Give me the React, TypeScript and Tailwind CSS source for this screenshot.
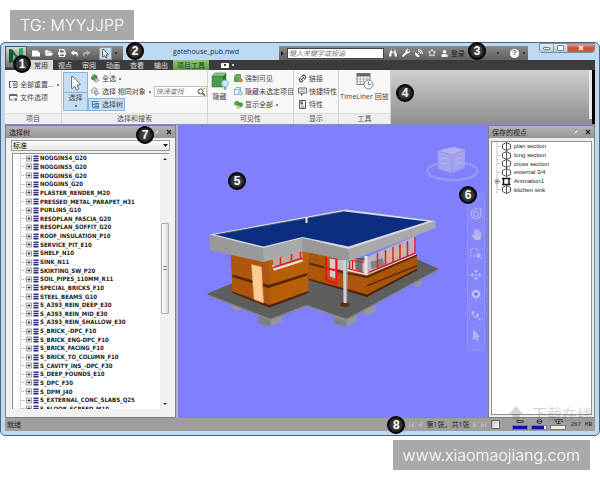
import type { ReactNode } from 'react';
import {
  FaBinoculars,
  FaFolderOpen,
  FaHandPaper,
  FaMousePointer,
  FaPrint,
  FaReply,
  FaSatelliteDish,
  FaShare,
  FaUser,
  FaWrench,
} from 'react-icons/fa';
import { Link2, Star } from 'lucide-react';

const tabs = ['常用', '视点', '审阅', '动画', '查看', '输出'];

const treeItems = [
  'NOGGINS4_G20',
  'NOGGINS5_G20',
  'NOGGINS6_G20',
  'NOGGINS_G20',
  'PLASTER_RENDER_M20',
  'PRESSED_METAL_PARAPET_H31',
  'PURLINS_G10',
  'RESOPLAN_FASCIA_G20',
  'RESOPLAN_SOFFIT_G20',
  'ROOF_INSULATION_P10',
  'SERVICE_PIT_E10',
  'SHELF_N10',
  'SINK_N11',
  'SKIRTING_SW_P20',
  'SOIL_PIPES_110MM_R11',
  'SPECIAL_BRICKS_F10',
  'STEEL_BEAMS_G10',
  'S_A393_REIN_DEEP_E30',
  'S_A393_REIN_MID_E30',
  'S_A393_REIN_SHALLOW_E30',
  'S_BRICK_-DPC_F10',
  'S_BRICK_ENG-DPC_F10',
  'S_BRICK_FACING_F10',
  'S_BRICK_TO_COLUMN_F10',
  'S_CAVITY_INS_-DPC_F30',
  'S_DEEP_FOUNDS_E10',
  'S_DPC_F30',
  'S_DPM_J40',
  'S_EXTERNAL_CONC_SLABS_Q25',
  'S_FLOOR_SCREED_M10',
];

const viewpoints = ['plan section', 'long section', 'cross section', 'external 3/4', 'Animation1', 'kitchen sink'];

function Badge({ n, className }: { n: number; className: string }) {
  return (
    <span
      className={`absolute z-20 flex size-[18px] items-center justify-center rounded-full border-2 border-black bg-radial from-[#555555] to-[#161616] font-['Liberation_Sans',sans-serif] text-[12px] leading-none font-bold text-white ${className}`}
    >
      {n}
    </span>
  );
}

function RibbonPanel({ title, className, children }: { title: string; className: string; children: ReactNode }) {
  return (
    <section className={`flex shrink-0 flex-col border-r border-[#d2d2d2] bg-[#f8f8f8] ${className}`}>
      <div className="flex flex-1 items-start pt-[2px]">{children}</div>
      <h2 className="h-[11px] border-t border-[#dcdcdc] bg-[#eeeeee] text-center leading-[10px] text-[#555555]">{title}</h2>
    </section>
  );
}

function RibbonButton({ icon, label, caret, active }: { icon: ReactNode; label: string; caret?: boolean; active?: boolean }) {
  return (
    <button
      className={`flex h-[13px] items-center gap-[2px] border px-[1px] whitespace-nowrap ${
        active ? 'border-[#86b4dd] bg-[#c5def5]' : 'border-transparent'
      }`}
    >
      <span className="flex size-[10px] shrink-0 items-center justify-center">{icon}</span>
      {label}
      {caret && <span className="ml-[1px] size-[2px] rounded-full bg-[#555555]" />}
    </button>
  );
}

function ResetIcon() {
  return (
    <svg viewBox="0 0 9 9" className="size-[9px]" fill="none" stroke="#666" strokeWidth="1">
      <path d="M2.5 1.5H8v6H4" />
      <path d="M.5 1v7M.5 1.5H2M.5 7.5H2" />
      <path d="M4 3l2 2.500M6 3v2.500H4" stroke="#3c7fc0" />
    </svg>
  );
}

function OptionsIcon() {
  return (
    <svg viewBox="0 0 9 9" className="size-[9px]" fill="none" stroke="#666" strokeWidth="1">
      <path d="M4.500 7H.5V1.500h7.500V4" />
      <path d="M.5 2.500h7.500" />
      <path d="M5 5.500h3.500L7 8.500z" fill="#555" stroke="none" />
    </svg>
  );
}

function GlobeCursorIcon({ green }: { green?: boolean }) {
  return (
    <svg viewBox="0 0 9 9" className="size-[9px]">
      <path d="M.5 3L3 .5l3 1.500v3L3.500 6.500.5 5z" fill={green ? '#4f9c4a' : '#e8e8e8'} stroke={green ? '#2d7430' : '#777'} strokeWidth=".7" />
      <path d="M3.500 3.500l4.500 3-2 .3L5 8.500z" fill="#fff" stroke="#555" strokeWidth=".6" />
    </svg>
  );
}

function TreeIcon() {
  return (
    <svg viewBox="0 0 9 9" className="size-[9px]" fill="none" stroke="#3f7fbf" strokeWidth="1">
      <path d="M.5 1.500h7M1.500 1.500v6h2M1.500 4.500h2" />
      <rect x="4" y="3.500" width="3.500" height="1.500" />
      <rect x="4" y="6.500" width="3.500" height="1.500" />
    </svg>
  );
}

function BoxIcon({ extra, outline }: { extra: string; outline?: boolean }) {
  return (
    <svg viewBox="0 0 9 9" className="size-[9px]">
      <path
        d="M.5 2.500L2 .5h4.500v5L5 7.500H.5z"
        fill={outline ? '#eef6fd' : '#5aa653'}
        stroke={outline ? '#4b94d0' : '#39783a'}
        strokeWidth=".7"
      />
      <path d="M.5 2.500H5v5M5 2.500L6.500.5" fill="none" stroke={outline ? '#4b94d0' : '#8bc685'} strokeWidth=".6" />
      <circle cx="6.800" cy="6.300" r="1.900" fill={extra} stroke="#888" strokeWidth=".4" />
    </svg>
  );
}

function ShowAllIcon() {
  return (
    <svg viewBox="0 0 9 9" className="size-[9px]">
      <path d="M.5 2.500L2.500 1l2.500 1v2.500L3 5.500.5 4.500z" fill="#5aa653" stroke="#39783a" strokeWidth=".5" />
      <path d="M4 3.500l2-1 2.500 1V6l-2 1L4 6z" fill="#4e9c4b" stroke="#2f7435" strokeWidth=".5" />
      <circle cx="4.500" cy="7" r="1.500" fill="#f2d54c" stroke="#a99029" strokeWidth=".4" />
    </svg>
  );
}

function HideIcon() {
  return (
    <svg viewBox="0 0 18 19" className="h-[19px] w-[18px]">
      <path d="M1 4l3-3h11l-3 3z" fill="#8fca85" />
      <path d="M1 4h11v11H1z" fill="#4e9c4b" />
      <path d="M12 4l3-3v11l-3 3z" fill="#2f7435" />
      <path d="M1 4h11v11H1zM1 4l3-3h11v11l-3 3" fill="none" stroke="#3a803c" strokeWidth=".6" />
      <circle cx="14" cy="11.500" r="3.400" fill="#cfeafc" stroke="#6da5cf" strokeWidth=".7" />
      <path d="M12.700 15h2.600v2.800h-2.600z" fill="#8a9aa8" />
    </svg>
  );
}

function TimeLinerIcon() {
  return (
    <svg viewBox="0 0 18 18" className="size-[18px]">
      <rect x="1" y="1.500" width="13" height="11" fill="#fff" stroke="#777" />
      <path d="M1 1.500h13v3H1z" fill="#666" />
      <path d="M1 7h13M1 9.700h13M4.300 4v8M7.600 4v8M10.900 4v8" stroke="#999" strokeWidth=".7" />
      <circle cx="12.500" cy="12.500" r="4.500" fill="#f0f4f7" stroke="#888" />
      <path d="M12.500 9.500v3.200h2.500" fill="none" stroke="#4a7fae" strokeWidth=".9" />
    </svg>
  );
}

function PanelHeader({ title }: { title: string }) {
  return (
    <header className="relative flex h-[12px] shrink-0 items-center bg-linear-to-b from-[#b4b4b4] to-[#969696] px-[3px] text-[#222222]">
      <h2 className="flex-1">{title}</h2>
      <button aria-label="固定" className="mr-[6px]">
        <svg viewBox="0 0 6 6" className="size-[6px]">
          <path d="M3 .5L5.500 3 4 3.300 3 5 1 3l1.700-1z" fill="#e4e4e4" stroke="#777" strokeWidth=".4" />
          <path d="M2 4L.5 5.500" stroke="#e4e4e4" strokeWidth=".8" />
        </svg>
      </button>
      <button aria-label="关闭">
        <svg viewBox="0 0 6 6" className="size-[6px]" stroke="#222" strokeWidth="1.200">
          <path d="M1 1l4 4M5 1L1 5" />
        </svg>
      </button>
    </header>
  );
}

function ModelScene() {
  return (
    <svg viewBox="178 125 309 293" className="size-full" role="img" aria-label="gatehouse">
      {/* footings */}
      <path d="M229 306l7 5 6-2v-4zM259 314l11 12 11-4v-8zM334 315l0 8 12 4 10-6v-8zM363 309v5l6 1 6-4v-5zM412 284l5 3 4-3v-4z" fill="#97979f" />
      <path d="M258 315l12 5v7l-12-4zM333 317l13 4v6l-13-4z" fill="#7f7f86" />
      {/* slab */}
      <path d="M206 294l26-11 70-24 110-2 26 12-92 50-40-14-36 14z" fill="#5e5e5e" />
      <path d="M206 294l64 25 36-14 40 14 92-50v1.500l-92 50-40-14-36 14-64-25z" fill="#85858a" />
      {/* walls */}
      <path d="M230 252l39 9v46l-37-14z" fill="#ad560b" />
      <path d="M269 260l39-11v43.500l-39 14.500z" fill="#b85e08" />
      <path d="M308 250l58.500 12v34L308 280z" fill="#ad560b" />
      <path d="M366.500 275l50-21v16l-50 26z" fill="#a95508" />
      <path d="M232 274.500l36 10.500 39-12v2.500l-39 12.500-36-11zM309 262.500l15 4v2l-15-4zM336 270l30.500 6 50-22v2l-50 22-30.500-6zM366.500 285l50-20v1.500l-50 20z" fill="#54260a" />
      <path d="M232 291.500l37 13.500 39-14v2l-39 14.500-37-14.500zM308 278.500l58.500 16 50-26v2l-50 26.500-58.500-17z" fill="#4a250d" />
      {/* door */}
      <path d="M251 264.500l10 2.500 2 36-9.500-3.500z" fill="#ffcb94" stroke="#e0a466" strokeWidth=".5" />
      {/* windows, small wing */}
      <path d="M272 259l30-8v9.500l-28 9z" fill="#b8a9a0" />
      <path d="M272.500 265l1.500 4.500 28-9" fill="none" stroke="#e9e2df" strokeWidth="2" />
      <path d="M272.500 267.500l29.500-9.500M280 257v8M291 254v8M300 252v8" fill="none" stroke="#e81925" strokeWidth="1.500" />
      {/* windows, front */}
      <path d="M336 257l30.500 4v14L336 269z" fill="#c5bfc6" />
      <path d="M355 260h7v12l-7-2z" fill="#75706e" />
      <path d="M325 256h11.500v27l-10-3z" fill="#ae5a12" />
      <path d="M329 258.500l6 1v19l-5.500-2z" fill="#cfccd3" />
      <path d="M325.500 256.500v23l10.500 4v-25M325 268l11 2.500" fill="none" stroke="#f3101c" strokeWidth="2" />
      <path d="M336 258.500l30 4M347 268.500l16 4M349 259v10M352 259v10" fill="none" stroke="#f3101c" strokeWidth="1.200" />
      {/* windows, side */}
      <path d="M366.500 257L415 236v17l-48.500 21z" fill="#b9b1c4" />
      <path d="M370 262l12-4 2 8-13 3z" fill="#85807a" />
      <path d="M385 254l20-8v8l-20 8z" fill="#d5b497" />
      <path d="M368 272.500L415 253M377 253v16M385 250v15M392.500 247v15M399.500 244v15M407 241v15M414.500 237v16.500" fill="none" stroke="#f01b28" strokeWidth="1.500" />
      <path d="M365.500 256v19" stroke="#e5e5e8" strokeWidth="3" />
      <path d="M347 270l19 4.800L416 254" fill="none" stroke="#e3dfdf" strokeWidth="1" />
      {/* roof */}
      <path d="M209 235l54 13 39-10 46 11 87-28v7l-86 33-47-10-39 11-53-12z" fill="#a9a9a9" />
      <path d="M209 235l54 13v14l-53-12zM302 238l46 11 1 12-47-10z" fill="#999999" />
      <path d="M209 234.500L345 209.500l90 11.500-87 28-46-11-39 10z" fill="#d7dad9" />
      <path d="M215 234.800L344 211.500l83 10-79 25-46-9.500-39 9.500z" fill="#0b2e80" />
      <path d="M215 234.800L344 211.500" stroke="#2c5c58" strokeWidth=".8" />
      <path d="M306 218v5" stroke="#fff" strokeWidth="1.800" />
      {/* column */}
      <path d="M340 303l4-2 5 2v3l-5 1-4-1z" fill="#54300f" />
      <path d="M342.500 260h4.500l-.5 43h-3.500z" fill="#d0d0d3" />
      <path d="M346.200 260v43" stroke="#96969b" strokeWidth="1" />
      {/* view cube */}
      <ellipse cx="452" cy="171" rx="25" ry="9" fill="none" stroke="#9696f5" strokeWidth="2.500" />
      <path d="M437 151l16-4 12 3-1 18-13 5-13-4z" fill="#a3a3ee" />
      <path d="M437 151l16-4 12 3-13 5z" fill="#b0b0f1" />
      <path d="M437 151l15 4-1 18M465 150l-13 5" fill="none" stroke="#9494ea" strokeWidth="1" />
      <path d="M441 158l6 1M441 163l6 1M456 159l5-1M456 164l5-2" stroke="#b7b7f3" strokeWidth="1" />
    </svg>
  );
}

function NavBar() {
  return (
    <nav
      aria-label="导航"
      className="absolute top-[68px] right-[3px] flex h-[158px] w-[18px] flex-col items-center justify-between border border-[#9494f4] bg-[#8787fb] pt-[14px] pb-[9px] text-[#b4b4f1]"
    >
      <button aria-label="导航控制盘">
        <svg viewBox="0 0 12 12" className="size-[12px]" fill="none" stroke="currentColor" strokeWidth="1.200">
          <path d="M6 1h5v5a5 5 0 1 1-5-5z" />
          <circle cx="6" cy="6" r="2.500" />
        </svg>
      </button>
      <button aria-label="平移"><FaHandPaper className="size-[11px]" /></button>
      <button aria-label="缩放窗口">
        <svg viewBox="0 0 12 12" className="size-[12px]" fill="none" stroke="currentColor">
          <path d="M8 8H1V1h7v3" strokeDasharray="2 1" />
          <circle cx="8.500" cy="7.500" r="1.800" fill="currentColor" />
          <path d="M10 9l2 2" />
        </svg>
      </button>
      <button aria-label="动态观察">
        <svg viewBox="0 0 12 12" className="size-[12px]" fill="currentColor">
          <path d="M6 0l2.300 3H3.700zM6 12l2.300-3H3.700zM0 6l3-2.300v4.600zM12 6L9 3.700v4.600z" />
          <path d="M6 3v6M3 6h6" stroke="currentColor" strokeWidth=".8" />
        </svg>
      </button>
      <button aria-label="环视">
        <svg viewBox="0 0 12 12" className="size-[12px]">
          <circle cx="6" cy="5" r="4.300" fill="#bdbdf5" />
          <circle cx="6" cy="5" r="1.600" fill="#6666c8" />
          <path d="M2 9l-1 2.500M10 9l1 2.500M6 10v1.500" stroke="#a5a5ee" />
        </svg>
      </button>
      <button aria-label="漫游">
        <svg viewBox="0 0 12 12" className="size-[12px]" fill="currentColor">
          <ellipse cx="3" cy="3" rx="1.500" ry="2.200" />
          <ellipse cx="7.500" cy="5.500" rx="1.500" ry="2.200" />
          <circle cx="4.500" cy="7" r="1" />
          <circle cx="9.500" cy="9.500" r="1.300" />
        </svg>
      </button>
      <button aria-label="选择"><FaMousePointer className="size-[11px]" /></button>
    </nav>
  );
}

function SelectionTree() {
  return (
    <aside className="flex w-[171px] shrink-0 flex-col border border-[#808080] bg-[#f1f1f1]">
      <div className="relative">
        <PanelHeader title="选择树" />
        <Badge n={7} className="right-[21px] top-0" />
      </div>
      <div className="relative mx-[5px] mt-[2px]">
        <select aria-label="选择树模式" className="block h-[11px] w-full appearance-none border border-[#a0a0a0] bg-linear-to-b from-white to-[#e6e6e6] px-[1px] text-[7px] leading-[9px]">
          <option>标准</option>
        </select>
        <svg viewBox="0 0 5 3" className="pointer-events-none absolute top-[4px] right-[2px] h-[3px] w-[5px]">
          <path d="M0 0h5L2.500 3z" fill="#222" />
        </svg>
      </div>
      <div className="mx-[6px] mt-[2px] mb-[8px] flex min-h-0 flex-1 overflow-hidden border-t border-l border-[#909090] bg-white">
        <ul className="ml-[7px] flex h-[calc(100%+4px)] flex-1 flex-col border-l border-dotted border-[#b0b0b0] font-['DejaVu_Sans_Condensed','DejaVu_Sans',sans-serif] text-[6px] leading-none font-bold text-[#1c1c1c]">
          {treeItems.map((item) => (
            <li key={item} className="flex min-h-0 flex-1 items-center whitespace-nowrap">
              <span className="w-[5px] border-t border-dotted border-[#b0b0b0]" />
              <svg viewBox="0 0 13 7" className="mr-[1px] h-[7px] w-[13px]">
                <rect x=".5" y="1" width="5" height="5" fill="#fff" stroke="#888" strokeWidth=".8" />
                <path d="M1.500 3.500h3M3 2v3" stroke="#222" strokeWidth=".8" />
                <path d="M7.500.5h5v1.500h-5zM7.500 2.700h5v1.500h-5zM7.500 5h5v1.500h-5z" fill="#27277f" />
                <path d="M7 1.500h4M7 4h4" stroke="#6868b5" strokeWidth=".5" />
              </svg>
              {item}
            </li>
          ))}
        </ul>
        <div className="flex w-[9px] flex-col items-center bg-[#f0f0f0] py-[4px]">
          <svg viewBox="0 0 4 2" className="h-[2px] w-[4px]"><path d="M0 2h4L2 0z" fill="#333" /></svg>
          <div className="flex-[64]" />
          <div className="flex w-[8px] flex-[91] items-center justify-center rounded-[1px] border border-[#b0b0b0] bg-linear-to-r from-white to-[#d8d8d8]">
            <span className="h-[4px] w-[4px] border-y border-[#888888]" />
          </div>
          <div className="flex-[91]" />
          <svg viewBox="0 0 4 2" className="h-[2px] w-[4px]"><path d="M0 0h4L2 2z" fill="#333" /></svg>
        </div>
      </div>
    </aside>
  );
}

function SavedViewpoints() {
  return (
    <aside className="flex w-[107px] shrink-0 flex-col border border-[#808080] bg-[#ededed]">
      <PanelHeader title="保存的视点" />
      <div className="mx-[2px] mt-[3px] mb-[2px] flex-1 border border-[#909090] bg-white pl-[2px]">
        <ul className="grid h-[52px] auto-rows-fr font-['Liberation_Sans',sans-serif] text-[6px] leading-none text-[#222222]">
          {viewpoints.map((name) => (
            <li key={name} className="flex items-center">
              <svg viewBox="0 0 17 9" className="mr-[3px] h-[9px] w-[17px]" fill="none">
                <path d="M3 0v9M3 4.500h4" stroke="#bbb" strokeWidth=".8" />
                {name === 'Animation1' ? (
                  <>
                    <circle cx="3" cy="4.500" r="2.300" fill="#fff" stroke="#999" strokeWidth=".8" />
                    <path d="M1.500 4.500h3M3 3v3" stroke="#555" strokeWidth=".8" />
                    <path d="M9.500 1v7M15 1v7M8 1.500h8.500M8 7.500h8.500" stroke="#111" strokeWidth="1.400" />
                  </>
                ) : (
                  <path d="M8.500 2.500L12.500.5l4 2v4l-4 2-4-2zM12.500.5v8" fill="#fff" stroke="#444" strokeWidth=".9" />
                )}
              </svg>
              {name}
            </li>
          ))}
        </ul>
      </div>
    </aside>
  );
}

function TitleBar() {
  return (
    <header className="relative flex h-[14px] shrink-0">
      <button aria-label="应用程序菜单" className="absolute top-0 left-0 z-10 h-[22px] w-[22px] border border-[#555555] bg-linear-to-b from-[#d5d5d5] to-[#777777]">
        <svg viewBox="0 0 20 20" className="size-full">
          <path d="M3 16V2l4 1 6 8V2l4-1v13l-3 1L6.500 7v8z" fill="#16803f" />
          <path d="M3 2l4 1v12l-4 1z" fill="#0b5a2b" />
          <path d="M13 2l4-1v13l-3 1z" fill="#2ea65a" />
        </svg>
      </button>
      <Badge n={1} className="top-[9px] left-[8px]" />
      <div className="flex w-[118px] items-center gap-[5px] bg-linear-to-b from-[#8c8c8c] to-[#5b5b5b] pl-[27px] text-white">
        <button aria-label="新建">
          <svg viewBox="0 0 8 7" className="h-[7px] w-[8px]"><path d="M0 .5h5.500L8 3v3.500H0z" fill="#fff" /></svg>
        </button>
        <button aria-label="打开"><FaFolderOpen className="size-[8px]" /></button>
        <button aria-label="打印"><FaPrint className="size-[8px]" /></button>
        <button aria-label="撤消"><FaReply className="size-[7px]" /></button>
        <button aria-label="恢复" className="text-[#b5b5b5]"><FaShare className="size-[7px]" /></button>
        <button aria-label="选择" className="ml-[4px] flex h-[13px] w-[13px] shrink-0 items-center justify-center border border-[#6fa4d6] bg-[#c4dcf2]">
          <FaMousePointer className="size-[9px] overflow-visible text-white" stroke="#444" strokeWidth={50} />
        </button>
        <span className="-ml-[2px] size-[2px] shrink-0 rounded-full bg-[#222222]" />
      </div>
      <Badge n={2} className="-top-[4px] left-[121px]" />
      <h1 className="flex-1 pl-[50px] font-['Open_Sans',sans-serif] text-[7px] leading-[12px] text-[#1d2b3a]">gatehouse_pub.nwd</h1>
      <div className="relative flex w-[249px] items-center gap-[5px] bg-linear-to-b from-[#8a8a8a] to-[#606060] pl-[2px] text-[#f2f2f2]">
        <svg viewBox="0 0 3 5" className="-mr-[2px] h-[5px] w-[3px]"><path d="M0 0l3 2.500L0 5z" fill="#222" /></svg>
        <input aria-label="搜索" placeholder="键入关键字或短语" className="h-[11px] w-[97px] border border-[#444444] bg-white px-[1px] text-[7px] italic text-black placeholder:text-[#777777]" />
        <button aria-label="查找"><FaBinoculars className="size-[8px]" /></button>
        <button aria-label="工具"><FaWrench className="size-[8px]" /></button>
        <button aria-label="通讯中心"><FaSatelliteDish className="size-[8px]" /></button>
        <button aria-label="收藏夹"><Star className="size-[8px]" strokeWidth={3} /></button>
        <button className="flex items-center gap-[3px] whitespace-nowrap text-[#1c1c1c]">
          <FaUser className="size-[7px] text-white" />
          登录
        </button>
        <Badge n={3} className="-top-[4px] right-[42px]" />
        <button aria-label="帮助" className="absolute right-[9px] flex size-[9px] items-center justify-center rounded-full bg-white font-['Liberation_Sans',sans-serif] text-[8px] leading-none font-bold text-[#2c5f9e]">?</button>
        <span className="absolute right-[3px] size-[2px] rounded-full bg-[#222222]" />
        <span className="absolute right-[29px] size-[2px] rounded-full bg-[#222222]" />
      </div>
      <div className="-mt-[3px] ml-[11px] flex h-[10px] w-[56px] overflow-hidden rounded-b-[3px] border border-[#7f8d9c]">
        <button aria-label="最小化" className="flex flex-1 items-center justify-center border-r border-[#8d9cac] bg-linear-to-b from-[#e2edf7] to-[#b4c7da]">
          <span className="h-[3px] w-[7px] rounded-[1px] border border-[#70808f] bg-white" />
        </button>
        <button aria-label="还原" className="flex flex-1 items-center justify-center border-r border-[#8d9cac] bg-linear-to-b from-[#e2edf7] to-[#b4c7da]">
          <span className="h-[6px] w-[7px] rounded-[1px] border border-[#70808f] bg-white" />
        </button>
        <button aria-label="关闭" className="flex w-[26px] items-center justify-center bg-linear-to-b from-[#e0a293] via-[#cd4f37] to-[#c9573e]">
          <svg viewBox="0 0 6 6" className="size-[6px]" stroke="#fff" strokeWidth="1.500"><path d="M1 1l4 4M5 1L1 5" /></svg>
        </button>
      </div>
    </header>
  );
}

function Ribbon() {
  return (
    <div className="relative flex h-[54px] shrink-0 bg-linear-to-b from-[#cfcfcf] to-[#8e8e8e] text-[#444444]">
      <RibbonPanel title="项目" className="w-[57px]">
        <div className="flex flex-col pt-[6px] pl-[1px]">
          <RibbonButton icon={<ResetIcon />} label="全部重置..." caret />
          <RibbonButton icon={<OptionsIcon />} label="文件选项" />
        </div>
      </RibbonPanel>
      <RibbonPanel title="选择和搜索" className="w-[146px]">
        <button className="ml-[1px] flex h-[39px] w-[25px] shrink-0 flex-col items-center border border-[#86b4dd] bg-[#c5def5]">
          <span className="flex h-[20px] w-full items-center justify-center border-b border-[#86b4dd]">
            <FaMousePointer className="size-[14px] overflow-visible text-white" stroke="#555" strokeWidth={32} />
          </span>
          <span className="leading-[10px]">选择</span>
          <span className="mt-[2px] size-[2px] rounded-full bg-[#555555]" />
        </button>
        <div className="flex flex-1 flex-col items-start">
          <RibbonButton icon={<GlobeCursorIcon green />} label="全选" caret />
          <div className="flex w-full items-center">
            <RibbonButton icon={<GlobeCursorIcon />} label="选择 相同对象" caret />
            <div className="relative ml-[1px] flex-1">
              <input aria-label="快速查找" placeholder="快速查找" className="block h-[11px] w-full min-w-0 border border-[#c2c2c2] bg-white px-[1px] text-[7px] italic placeholder:text-[#777777]" />
              <svg viewBox="0 0 9 9" className="absolute top-[1px] right-[1px] size-[9px]" fill="none" stroke="#444">
                <circle cx="3.500" cy="4.500" r="2.500" />
                <path d="M5.500 6.500L8 8.500" strokeWidth="1.500" />
                <path d="M5 3l3-2" stroke="#e0a52c" strokeWidth="1.500" />
              </svg>
            </div>
          </div>
          <RibbonButton icon={<TreeIcon />} label="选择树" active />
        </div>
      </RibbonPanel>
      <RibbonPanel title="可见性" className="w-[86px]">
        <button className="flex w-[23px] shrink-0 flex-col items-center gap-[1px]">
          <HideIcon />
          <span className="leading-[10px]">隐藏</span>
        </button>
        <div className="flex flex-col items-start">
          <RibbonButton icon={<BoxIcon extra="#d8852c" />} label="强制可见" />
          <RibbonButton icon={<BoxIcon extra="#bfe3fa" outline />} label="隐藏未选定项目" />
          <RibbonButton icon={<ShowAllIcon />} label="显示全部" caret />
        </div>
      </RibbonPanel>
      <RibbonPanel title="显示" className="w-[45px]">
        <div className="flex flex-col items-start pl-[1px]">
          <RibbonButton icon={<Link2 className="size-[9px] -rotate-45" strokeWidth={3} />} label="链接" />
          <RibbonButton
            icon={
              <svg viewBox="0 0 9 9" className="size-[9px]" fill="#fff" stroke="#666">
                <path d="M.5 1h8v5H5L3.500 8.500V6h-3z" />
                <path d="M2 2.800h5M2 4.300h5" strokeWidth=".6" />
              </svg>
            }
            label="快捷特性"
          />
          <RibbonButton
            icon={
              <svg viewBox="0 0 9 9" className="size-[9px]" fill="#fff" stroke="#555">
                <path d="M1.500.5h6v8h-6z" />
                <path d="M2.500 1.500h2.500v3H2.500z" fill="#3668a8" stroke="none" />
                <path d="M3 6h3.500M3 7.300h3.500" strokeWidth=".6" />
              </svg>
            }
            label="特性"
          />
        </div>
      </RibbonPanel>
      <RibbonPanel title="工具" className="w-[52px]">
        <button className="flex flex-1 flex-col items-center gap-[2px] whitespace-nowrap">
          <TimeLinerIcon />
          <span className="leading-[10px]">TimeLiner 回放</span>
        </button>
      </RibbonPanel>
      <div className="relative flex-1">
        <Badge n={4} className="top-[14px] left-[5px]" />
      </div>
      <div className="mb-[5px] w-[3px] bg-[#e9e9e9]" />
      <div className="w-[3px] bg-black" />
    </div>
  );
}

function StatusBar() {
  return (
    <footer className="relative flex h-[13px] shrink-0 items-center bg-[#9e9e9e] pr-[3px] pl-[2px] text-[#1f1f1f]">
      <span className="flex-1">就绪</span>
      <span className="relative mr-[5px] flex items-center gap-[4px]">
        <Badge n={8} className="-top-[4px] -left-[22px]" />
        <button aria-label="第一张"><svg viewBox="0 0 5 6" className="h-[6px] w-[5px]" fill="#b8b8b8"><path d="M0 0h1v6H0zM5 0v6L1.500 3z" /></svg></button>
        <button aria-label="上一张"><svg viewBox="0 0 4 6" className="h-[6px] w-[4px]" fill="#b8b8b8"><path d="M4 0v6L0 3z" /></svg></button>
        <span className="whitespace-nowrap">第1张，共1张</span>
        <button aria-label="下一张"><svg viewBox="0 0 4 6" className="h-[6px] w-[4px]" fill="#b8b8b8"><path d="M0 0v6l4-3z" /></svg></button>
        <button aria-label="最后一张"><svg viewBox="0 0 5 6" className="h-[6px] w-[5px]" fill="#b8b8b8"><path d="M4 0h1v6H4zM0 0v6l3.500-3z" /></svg></button>
      </span>
      <button aria-label="图纸浏览器" className="mr-[12px] h-[9px] w-[9px] border border-[#666666] bg-linear-to-br from-[#bbbbbb] to-white" />
      <div className="flex gap-[3px]">
        {[100, 85, 0].map((value, i) => (
          <div key={value} className="flex w-[16px] flex-col items-center gap-[1px]">
            <svg viewBox="0 0 9 5" className="h-[5px] w-[9px]" fill="none" stroke="#333" strokeWidth=".9">
              {i === 0 && <path d="M1 1.500h5l2 1-2 1H1z" />}
              {i === 1 && <path d="M2 2.500a2.500 2 0 1 0 5 0a2.500 2 0 1 0-5 0M2 2.500h5" />}
              {i === 2 && <path d="M0 .7h9M1 2.500h2M4 2.500h2M7 2.500h2M4.500 2v3M2.500 4.500h4" />}
            </svg>
            <div className="h-[5px] w-full border border-[#777799] bg-[#eeeeee]">
              <div className="h-full bg-[#1212b0]" style={{ width: `${value}%` }} />
            </div>
          </div>
        ))}
      </div>
      <span className="ml-[4px] font-['Liberation_Mono',monospace] text-[6px] leading-none whitespace-nowrap">267 MB</span>
      <span className="pointer-events-none absolute -top-[12px] right-[3px] flex items-center text-[15px] leading-none text-[#707070]/30">
        <svg viewBox="0 0 18 18" className="mr-[8px] size-[16px]" fill="currentColor"><path d="M9 0l8 9h-4v7H5V9H1z" /></svg>
        下载在线
      </span>
    </footer>
  );
}

export default function App() {
  return (
    <div className="flex h-screen flex-col bg-white font-['Open_Sans','Noto_Sans_CJK_SC',sans-serif] text-[7px] leading-[9px]">
      <div className="px-[10px] pt-[10px]">
        <p className="inline-flex h-[30px] items-center bg-[#a9a9a9] px-[10px] font-['Inter',sans-serif] text-[16px] font-light text-white">TG: MYYJJPP</p>
      </div>
      <main className="mt-[2px] flex min-h-0 flex-1 flex-col rounded-[5px] border border-[#4c6681] bg-[#bdd9f4] px-[4px] pt-[3px] pb-[4px]">
        <TitleBar />
        <nav className="flex h-[10px] shrink-0 items-stretch bg-[#3c3c3c] pl-[24px] text-[#e0e0e0]">
          {tabs.map((tab, index) => (
            <button key={tab} className={`px-[5px] ${index === 0 ? 'bg-[#dcdcdc] text-[#333333]' : ''}`}>
              {tab}
            </button>
          ))}
          <button className="bg-linear-to-b from-[#8fc574] to-[#5f9d4a] px-[4px] text-[#1d3b16]">项目工具</button>
          <button aria-label="最小化功能区" className="ml-[12px] flex items-center gap-[3px]">
            <span className="flex h-[5px] w-[8px] items-center justify-center rounded-[1px] bg-white"><span className="size-[2px] bg-[#3c3c3c]" /></span>
            <span className="size-[2px] rounded-full bg-white" />
          </button>
        </nav>
        <Ribbon />
        <div className="flex min-h-0 flex-1 border-t border-[#8a8ac8] bg-[#b4b4b4]">
          <SelectionTree />
          <div className="relative ml-[2px] min-w-0 flex-1 bg-[#8080ff]">
            <div className="absolute inset-0"><ModelScene /></div>
            <Badge n={5} className="top-[47px] left-[50px]" />
            <NavBar />
            <Badge n={6} className="top-[61px] right-[11px]" />
          </div>
          <SavedViewpoints />
        </div>
        <StatusBar />
      </main>
      <div className="flex justify-end px-[10px] pt-[4px] pb-[10px]">
        <a href="https://www.xiaomaojiang.com" className="flex h-[30px] items-center bg-[#a9a9a9] px-[10px] font-['Inter',sans-serif] text-[16px] font-light text-white">www.xiaomaojiang.com</a>
      </div>
    </div>
  );
}
